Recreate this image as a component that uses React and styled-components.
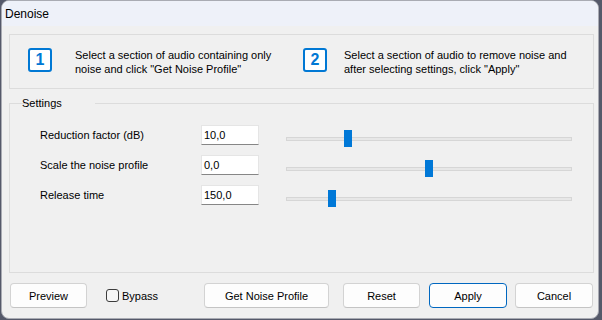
import React from "react";
import styled, { createGlobalStyle } from "styled-components";

const Global = createGlobalStyle`
  html, body { margin: 0; padding: 0; }
  body {
    background: #55596a;
    font-family: "Liberation Sans", Arial, sans-serif;
    font-size: 11px;
    color: #000;
    width: 602px;
    height: 320px;
    overflow: hidden;
  }
`;

const Window = styled.div`
  margin-left: 1px;
  width: 598px;
  height: 319px;
  box-sizing: border-box;
  border: 1px solid #a9abb3;
  border-radius: 8px;
  overflow: hidden;
  background: #f0f0f0;
  display: flex;
  flex-direction: column;
`;

const TitleBar = styled.div`
  height: 25px;
  flex: none;
  background: #eef1f9;
  display: flex;
  align-items: center;
  padding-left: 3px;
  font-size: 12px;
`;

const Body = styled.div`
  flex: 1;
  display: flex;
  flex-direction: column;
  padding: 8px 4px 0 7px;
`;

const InfoBox = styled.div`
  height: 55px;
  box-sizing: border-box;
  border: 1px solid #dcdcdc;
  display: grid;
  grid-template-columns: 293px 1fr;
  align-items: center;
`;

const Step = styled.div`
  display: flex;
  align-items: center;
  padding-left: ${(p) => p.$pad}px;
  gap: ${(p) => p.$gap}px;
`;

const StepIcon = styled.div`
  width: 24px;
  height: 24px;
  box-sizing: border-box;
  border: 2.5px solid #0078d4;
  border-radius: 3px;
  background: #fff;
  color: #0078d4;
  font-weight: bold;
  font-size: 16px;
  display: flex;
  align-items: center;
  justify-content: center;
  flex: none;
  margin-top: -3px;
`;

const StepText = styled.div`
  line-height: 14px;
`;

const Group = styled.fieldset`
  margin: 7px 0 0 0;
  padding: 15px 0 0 30px;
  border: 1px solid #dcdcdc;
  height: 177px;
  box-sizing: border-box;
  min-width: 0;
`;

const Legend = styled.legend`
  margin-left: 9px;
  padding: 0 3px;
  font-size: 11px;
  line-height: 14px;
  position: relative;
  left: -30px;
`;

const Row = styled.div`
  display: flex;
  align-items: flex-start;
  height: 30px;
`;

const Label = styled.div`
  width: 161px;
  line-height: 20px;
  flex: none;
`;

const Input = styled.div`
  width: 58px;
  height: 20px;
  box-sizing: border-box;
  background: #fff;
  border: 1px solid #e5e5e5;
  border-bottom-color: #868686;
  padding-left: 2px;
  line-height: 18px;
  flex: none;
`;

const Slider = styled.div`
  position: relative;
  margin-left: 27px;
  margin-top: 5px;
  width: 286px;
  height: 17px;
  flex: none;
`;

const Track = styled.div`
  position: absolute;
  left: 0;
  right: 0;
  top: 7px;
  height: 4px;
  box-sizing: border-box;
  border: 1px solid #d6d6d6;
  background: #e7e7e7;
`;

const Thumb = styled.div`
  position: absolute;
  top: 0;
  width: 8px;
  height: 17px;
  background: #0078d7;
`;

const Buttons = styled.div`
  display: flex;
  align-items: center;
  margin-top: 10px;
  padding: 0 1px;
`;

const Button = styled.div`
  width: ${(p) => p.$w}px;
  margin-left: ${(p) => p.$ml || 0}px;
  height: 25px;
  box-sizing: border-box;
  border: 1px solid ${(p) => (p.$primary ? "#0067c0" : "#d3d3d3")};
  border-bottom-color: ${(p) => (p.$primary ? "#0067c0" : "#c4c4c4")};
  border-radius: 4px;
  background: #fdfdfd;
  display: flex;
  align-items: center;
  justify-content: center;
  flex: none;
`;

const Check = styled.label`
  display: flex;
  align-items: center;
  margin-left: 19px;
  gap: 3px;
`;

const Box = styled.span`
  width: 13px;
  height: 13px;
  box-sizing: border-box;
  border: 1px solid #3c3c3c;
  border-radius: 3px;
  background: #f6f6f6;
`;

const Spacer = styled.div`
  flex: 1;
`;

const rows = [
  { label: "Reduction factor (dB)", value: "10,0", v: 10, min: 0, max: 48 },
  { label: "Scale the noise profile", value: "0,0", v: 0, min: -20, max: 20 },
  { label: "Release time", value: "150,0", v: 150, min: 0, max: 1000 },
];

export default function App() {
  return (
    <>
      <Global />
      <Window>
        <TitleBar>Denoise</TitleBar>
        <Body>
          <InfoBox>
            <Step $pad={18} $gap={23}>
              <StepIcon>1</StepIcon>
              <StepText>
                Select a section of audio containing only
                <br />
                noise and click "Get Noise Profile"
              </StepText>
            </Step>
            <Step $pad={0} $gap={17}>
              <StepIcon>2</StepIcon>
              <StepText>
                Select a section of audio to remove noise and
                <br />
                after selecting settings, click "Apply"
              </StepText>
            </Step>
          </InfoBox>
          <Group>
            <Legend>Settings</Legend>
            {rows.map((r) => (
              <Row key={r.label}>
                <Label>{r.label}</Label>
                <Input>{r.value}</Input>
                <Slider>
                  <Track />
                  <Thumb
                    style={{ left: `${((r.v - r.min) / (r.max - r.min)) * 278}px` }}
                  />
                </Slider>
              </Row>
            ))}
          </Group>
          <Buttons>
            <Button $w={77}>Preview</Button>
            <Check>
              <Box />
              Bypass
            </Check>
            <Spacer />
            <Button $w={125}>Get Noise Profile</Button>
            <Button $w={77} $ml={14}>Reset</Button>
            <Button $w={78} $ml={9} $primary>Apply</Button>
            <Button $w={78} $ml={8}>Cancel</Button>
          </Buttons>
        </Body>
      </Window>
    </>
  );
}
